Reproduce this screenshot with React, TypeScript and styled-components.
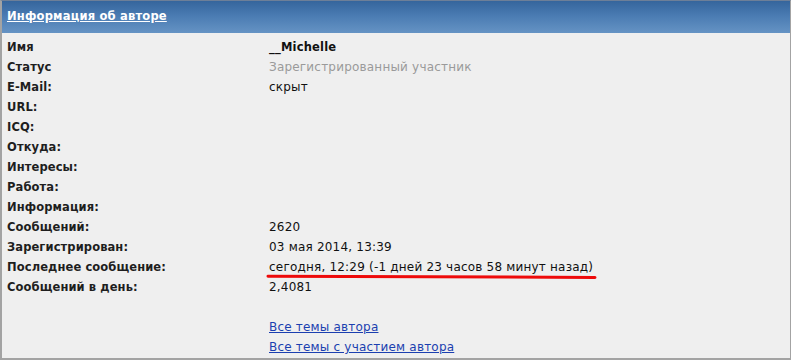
import React from 'react'
import styled, { createGlobalStyle } from 'styled-components'

const GlobalStyle = createGlobalStyle`
    html, body {
        margin: 0;
        padding: 0;
        background: #ffffff;
    }
    body {
        font-family: "DejaVu Sans", Verdana, sans-serif;
        font-size: 12px;
    }
`

const Panel = styled.div`
    width: 791px;
    height: 360px;
    box-sizing: border-box;
    border: 1px solid #a3a3a3;
    border-left-width: 2px;
    border-bottom-width: 2px;
    border-top-color: #6d7f98;
    background: #efefef;
    position: relative;
    overflow: hidden;
`

const Header = styled.div`
    height: 32px;
    box-sizing: border-box;
    display: flex;
    align-items: center;
    padding: 0 0 2px 5px;
    background: linear-gradient(to bottom, #35659c 0%, #4a7bb2 45%, #6593c4 100%);
`

const HeaderLink = styled.a`
    color: #ffffff;
    font-weight: bold;
    font-size: 11.5px;
    letter-spacing: 0.2px;
    text-decoration: underline;
`

const Body = styled.div`
    display: grid;
    grid-template-columns: 262px 1fr;
    grid-auto-rows: 20px;
    padding: 4px 0 0 5px;
`

const Label = styled.div`
    display: flex;
    align-items: center;
    font-weight: bold;
    font-size: 11.5px;
    letter-spacing: 0.1px;
    color: #1e1e1e;
`

const Value = styled.div<{ $muted?: boolean; $bold?: boolean }>`
    display: flex;
    align-items: center;
    letter-spacing: 0.2px;
    color: ${(p) => (p.$muted ? '#9a9a9a' : '#111111')};
    font-weight: ${(p) => (p.$bold ? 'bold' : 'normal')};
    font-size: ${(p) => (p.$bold ? '11.5px' : '12px')};
    white-space: nowrap;
`

const Link = styled.a`
    color: #1b3fb0;
    text-decoration: underline;
`

const Marker = styled.svg`
    position: absolute;
    left: 264px;
    top: 272px;
`

const rows: { label: string; value: string; muted?: boolean; bold?: boolean }[] = [
    { label: 'Имя', value: '__Michelle', bold: true },
    { label: 'Статус', value: 'Зарегистрированный участник', muted: true },
    { label: 'E-Mail:', value: 'скрыт' },
    { label: 'URL:', value: '' },
    { label: 'ICQ:', value: '' },
    { label: 'Откуда:', value: '' },
    { label: 'Интересы:', value: '' },
    { label: 'Работа:', value: '' },
    { label: 'Информация:', value: '' },
    { label: 'Сообщений:', value: '2620' },
    { label: 'Зарегистрирован:', value: '03 мая 2014, 13:39' },
    { label: 'Последнее сообщение:', value: 'сегодня, 12:29 (-1 дней 23 часов 58 минут назад)' },
    { label: 'Сообщений в день:', value: '2,4081' },
]

export default function App() {
    return (
        <>
            <GlobalStyle />
            <Panel>
                <Header>
                    <HeaderLink href="#">Информация об авторе</HeaderLink>
                </Header>
                <Body>
                    {rows.map((r) => (
                        <React.Fragment key={r.label}>
                            <Label>{r.label}</Label>
                            <Value $muted={r.muted} $bold={r.bold}>{r.value}</Value>
                        </React.Fragment>
                    ))}
                    <Label />
                    <Value />
                    <Label />
                    <Value><Link href="#">Все темы автора</Link></Value>
                    <Label />
                    <Value><Link href="#">Все темы с участием автора</Link></Value>
                </Body>
                <Marker width="332" height="8" viewBox="0 0 332 8">
                    <path d="M2 3.2 C 90 3.4, 200 3.8, 329 4.4" stroke="#ee0a0a" strokeWidth="3" strokeLinecap="round" fill="none" />
                </Marker>
            </Panel>
        </>
    )
}
